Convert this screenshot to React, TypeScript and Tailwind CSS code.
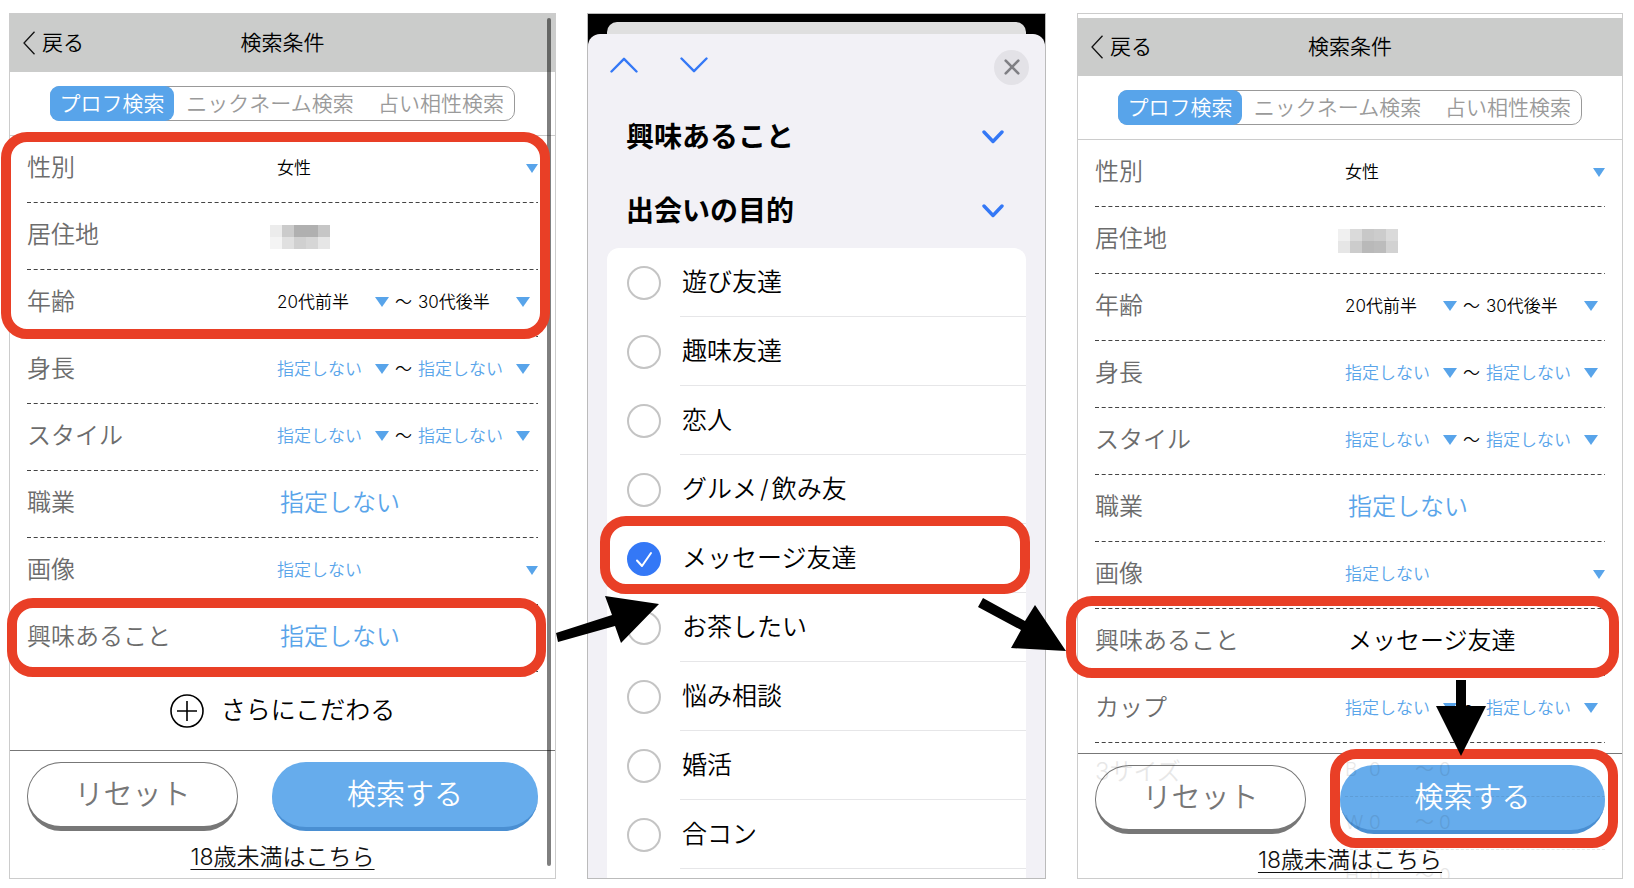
import { useState, type ReactNode } from "react";

type RowData =
  | { kind: "single"; label: string; value: string; dark?: boolean }
  | { kind: "range"; label: string; from: string; to: string; dark?: boolean }
  | { kind: "link"; label: string; value: string; dark?: boolean }
  | { kind: "masked"; label: string; shades: string[] };

const NONE = "指定しない";

const shadesA = [
  "bg-[#ececec]", "bg-[#cbcbcb]", "bg-[#b0b0b0]", "bg-[#b0b0b0]", "bg-[#c6c6c6]",
  "bg-[#f4f4f4]", "bg-[#e0e0e0]", "bg-[#d0d0d0]", "bg-[#d6d6d6]", "bg-[#e6e6e6]",
];
const shadesB = [
  "bg-[#f0f0f0]", "bg-[#dadada]", "bg-[#c8c8c8]", "bg-[#cccccc]", "bg-[#dadada]",
  "bg-[#e6e6e6]", "bg-[#cccccc]", "bg-[#b9b9b9]", "bg-[#bcbcbc]", "bg-[#d2d2d2]",
];

const detailRows: RowData[] = [
  { kind: "range", label: "身長", from: NONE, to: NONE },
  { kind: "range", label: "スタイル", from: NONE, to: NONE },
  { kind: "link", label: "職業", value: NONE },
  { kind: "single", label: "画像", value: NONE },
];

const basicRows = (shades: string[]): RowData[] => [
  { kind: "single", label: "性別", value: "女性", dark: true },
  { kind: "masked", label: "居住地", shades },
  { kind: "range", label: "年齢", from: "20代前半", to: "30代後半", dark: true },
];

function Highlight({ className, children }: { className: string; children?: ReactNode }) {
  return (
    <div className={`pointer-events-none absolute z-10 rounded-[26px] border-[10px] border-[#e93f26] ${className}`}>
      {children}
    </div>
  );
}

function Picker({ label, value, dark, className, small }: { label: string; value: string; dark?: boolean; className: string; small?: boolean }) {
  return (
    <span className={`relative flex items-center ${className}`}>
      <select
        aria-label={label}
        defaultValue={value}
        className={`w-full appearance-none bg-transparent text-[17px] leading-7 ${dark ? "text-black" : "text-[#5aa5ea]"}`}
      >
        <option>{value}</option>
      </select>
      <svg
        viewBox="0 0 14 10"
        preserveAspectRatio="none"
        className={`pointer-events-none absolute right-0 fill-[#58a4ea] ${small ? "h-[9px] w-3" : "h-[10px] w-[14px]"}`}
      >
        <path d="M0 0H14L7 10Z" />
      </svg>
    </span>
  );
}

function Row({ row, children }: { row: RowData; children?: ReactNode }) {
  return (
    <div className="relative flex h-[67px] items-center pb-[3px]">
      <span className="w-[250px] shrink-0 text-2xl text-[#6c6c6c]">{row.label}</span>
      {row.kind === "single" && (
        <Picker label={row.label} value={row.value} dark={row.dark} className="flex-1" small />
      )}
      {row.kind === "range" && (
        <div className="flex items-center gap-[6px]">
          <Picker label={`${row.label} 下限`} value={row.from} dark={row.dark} className="w-28" />
          <span className="text-[17px] leading-7 text-black">〜</span>
          <Picker label={`${row.label} 上限`} value={row.to} dark={row.dark} className="w-28" />
        </div>
      )}
      {row.kind === "link" && (
        <button type="button" className={`ml-[3px] text-2xl ${row.dark ? "text-black" : "text-[#5aa5ea]"}`}>
          {row.value}
        </button>
      )}
      {row.kind === "masked" && (
        <div className="-ml-[7px] mt-1 grid grid-cols-5">
          {row.shades.map((s, i) => (
            <span key={i} className={`size-3 ${s}`} />
          ))}
        </div>
      )}
      <svg className="absolute inset-x-0 bottom-0 h-px w-full" aria-hidden="true">
        <line x1="0" y1="0.5" x2="100%" y2="0.5" stroke="#444" strokeWidth="1" strokeDasharray="4 2.7" />
      </svg>
      {children}
    </div>
  );
}

function SearchHeader() {
  return (
    <>
      <header className="grid h-[58px] grid-cols-[1fr_auto_1fr] items-center bg-[#cbcccb] pl-[13px] text-[21px] text-black">
        <button type="button" className="flex items-center gap-[7px]">
          <svg viewBox="0 0 12 24" className="h-6 w-3 fill-none stroke-[#111]" strokeWidth="1.3">
            <path d="M11.5 0.7L1 12L11.5 23.3" />
          </svg>
          戻る
        </button>
        <h1 className="pr-[13px]">検索条件</h1>
      </header>
      <div className="border-b border-[#ccc] px-[40px] py-[14px]">
        <div className="flex h-[35px] items-stretch rounded-[10px] border border-[#999] text-[21px] leading-[31px] text-[#9a9a9a]">
          <button type="button" className="-my-px -ml-px w-[124px] rounded-[9px] bg-[#58a4ea] text-white">
            プロフ検索
          </button>
          <button type="button" className="flex-1 pr-1">ニックネーム検索</button>
          <button type="button" className="pr-[10px] pl-2">占い相性検索</button>
        </div>
      </div>
    </>
  );
}

function Footer({ highlighted }: { highlighted?: boolean }) {
  return (
    <footer className={`relative mt-auto border-t border-[#777] px-[17px] pt-[11px] ${highlighted ? "pb-px" : "pb-1"}`}>
      <div className="flex gap-[34px]">
        <button
          type="button"
          className="h-[69px] w-[211px] rounded-[34px] border border-b-[5px] border-[#777] bg-white text-[29px] leading-none text-[#777]"
        >
          リセット
        </button>
        <div className="relative flex-1">
          <button
            type="button"
            className="h-[69px] w-full rounded-[34px] border-b-4 border-[#4a8fd2] bg-[#66acec] text-[29px] leading-none text-white"
          >
            検索する
          </button>
          {highlighted && (
            <Highlight className="-top-[16px] -right-[13px] -bottom-[14px] -left-[10px]">
              <svg viewBox="0 0 50 76" className="absolute -top-[79px] left-[96px] h-[76px] w-[50px]">
                <path d="M20 0H30V26H50L25 76L0 26H20Z" />
              </svg>
            </Highlight>
          )}
        </div>
      </div>
      <div className="mt-[9px] flex h-[34px] items-center justify-center">
        <a href="#under18" className="text-[23px] leading-[34px] text-[#111] underline decoration-1 underline-offset-4">
          18歳未満はこちら
        </a>
      </div>
      {highlighted && (
        <div className="pointer-events-none absolute inset-0 overflow-hidden px-[17px] text-[#222] opacity-10" aria-hidden="true">
          <div className="flex">
            <span className="w-[250px] shrink-0 text-2xl leading-9">3サイズ</span>
            <div className="-mt-[10px] flex-1 text-[19px] leading-[52px]">
              {["B", "W", "H"].map((m) => (
                <div key={m} className="flex h-[53px] border-b border-dashed border-[#222] last:border-0">
                  <span className="w-6">{m}</span>
                  <span className="w-[46px]">0</span>
                  <span className="w-6">〜</span>
                  <span>0</span>
                </div>
              ))}
            </div>
          </div>
        </div>
      )}
    </footer>
  );
}

function InitialSearch() {
  return (
    <section className="relative flex flex-col border border-[#ccc] bg-white">
      <SearchHeader />
      <div className="px-[17px]">
        <div className="relative">
          {basicRows(shadesA).map((r) => (
            <Row key={r.label} row={r} />
          ))}
          <Highlight className="-top-1 -right-3 -bottom-[2px] -left-[26px]" />
        </div>
        {detailRows.map((r) => (
          <Row key={r.label} row={r} />
        ))}
        <Row row={{ kind: "link", label: "興味あること", value: NONE }}>
          <Highlight className="-top-[7px] -right-2 -bottom-[5px] -left-5" />
        </Row>
      </div>
      <button type="button" className="flex h-[77px] items-center justify-center gap-[17px] text-[25px] text-black">
        <svg viewBox="0 0 34 34" className="size-[34px] fill-none stroke-black" strokeWidth="1.6">
          <circle cx="17" cy="17" r="16" />
          <path d="M17 7V27M7 17H27" />
        </svg>
        さらにこだわる
      </button>
      <Footer />
      <div className="absolute top-[4px] right-[4px] bottom-[12px] w-[4px] rounded-full bg-black/50" />
    </section>
  );
}

function RefinedSearch() {
  return (
    <section className="relative flex flex-col border border-[#ccc] bg-white pt-1">
      <SearchHeader />
      <div className="px-[17px]">
        {[...basicRows(shadesB), ...detailRows].map((r) => (
          <Row key={r.label} row={r} />
        ))}
        <Row row={{ kind: "link", label: "興味あること", value: "メッセージ友達", dark: true }}>
          <Highlight className="-top-[13px] -right-[14px] -bottom-[2px] -left-[29px]" />
        </Row>
        <Row row={{ kind: "range", label: "カップ", from: NONE, to: NONE }} />
      </div>
      <Footer highlighted />
    </section>
  );
}

const purposes = [
  "遊び友達", "趣味友達", "恋人", "グルメ/飲み友", "メッセージ友達",
  "お茶したい", "悩み相談", "婚活", "合コン",
];

function PurposeName({ name }: { name: string }) {
  const [head, tail] = name.split("/");
  return (
    <span>
      {head}
      {tail && <span className="px-[3px]">/</span>}
      {tail}
    </span>
  );
}

function Chevron({ up, bold }: { up?: boolean; bold?: boolean }) {
  return bold ? (
    <svg viewBox="0 0 22 14" className="h-[14px] w-[22px] fill-none stroke-[#3478f6]" strokeWidth="3.4" strokeLinecap="round" strokeLinejoin="round">
      <path d="M2 2L11 11.5L20 2" />
    </svg>
  ) : (
    <svg viewBox="0 0 28 16" className="h-4 w-7 fill-none stroke-[#3478f6]" strokeWidth="2.4" strokeLinecap="round" strokeLinejoin="round">
      <path d={up ? "M1.5 14.5L14 1.8L26.5 14.5" : "M1.5 1.5L14 14.2L26.5 1.5"} />
    </svg>
  );
}

function PurposeSheet() {
  const [checked, setChecked] = useState<string>("メッセージ友達");
  return (
    <section className="flex flex-col border border-[#bbb] bg-black pt-2">
      <div className="mx-[19px] h-3 rounded-t-[10px] bg-[#dfdfdf]" />
      <div className="flex flex-1 flex-col rounded-t-[12px] bg-[#f2f1f6]">
        <div className="flex h-[66px] items-center pr-4 pl-[22px]">
          <div className="flex gap-[42px] pb-1">
            <button type="button" aria-label="前へ"><Chevron up /></button>
            <button type="button" aria-label="次へ"><Chevron /></button>
          </div>
          <button type="button" aria-label="閉じる" className="ml-auto flex size-[35px] items-center justify-center rounded-full bg-[#e3e2e7]">
            <svg viewBox="0 0 16 16" className="size-4 fill-none stroke-[#7f7f84]" strokeWidth="2.6" strokeLinecap="round">
              <path d="M1.7 1.7L14.3 14.3M14.3 1.7L1.7 14.3" />
            </svg>
          </button>
        </div>
        {["興味あること", "出会いの目的"].map((t) => (
          <button key={t} type="button" className="flex h-[74px] items-center justify-between pr-[41px] pl-[38px] text-[28px] font-bold text-black">
            {t}
            <Chevron bold />
          </button>
        ))}
        <ul className="mx-[19px] flex flex-1 flex-col rounded-t-[12px] bg-white pb-[9px]">
          {purposes.map((p) => (
            <li key={p} className="relative flex min-h-[68px] flex-1">
              <label className="flex flex-1 items-stretch pl-5">
                <span className="relative mr-[19px] flex items-center">
                  <input
                    type="checkbox"
                    checked={checked === p}
                    onChange={() => setChecked(p)}
                    className="size-[34px] appearance-none rounded-full border-2 border-[#c4c4c4] checked:border-[#3478f6] checked:bg-[#3478f6]"
                  />
                  {checked === p && (
                    <svg viewBox="0 0 34 34" className="pointer-events-none absolute size-[34px] fill-none stroke-white" strokeWidth="2" strokeLinecap="round" strokeLinejoin="round">
                      <path d="M10 18.5L15 24L24 11" />
                    </svg>
                  )}
                </span>
                <span className="flex flex-1 items-center border-b border-[#e6e6e8] pt-[2px] pl-[2px] text-[25px] text-black">
                  <PurposeName name={p} />
                </span>
              </label>
              {p === "メッセージ友達" && (
                <Highlight className="-top-2 -right-1 -bottom-px -left-[7px]">
                  <svg viewBox="0 0 104 50" className="absolute top-[69px] -left-[54px] h-[50px] w-[104px]">
                    <path d="M0 38L56 20L49 1L103 9L65 48L59 31L2 47Z" />
                  </svg>
                  <svg viewBox="0 0 92 56" className="absolute top-[71px] -right-[48px] h-14 w-[92px]">
                    <path d="M7 1L49 24L59 8L90 54L35 51L45 33L2 10Z" />
                  </svg>
                </Highlight>
              )}
            </li>
          ))}
        </ul>
      </div>
    </section>
  );
}

export default function App() {
  return (
    <main
      lang="ja"
      className="grid min-h-screen grid-cols-[547fr_459fr_546fr] gap-[31px] overflow-hidden bg-white pt-[13px] pr-[11px] pb-[9px] pl-[9px] font-['Inter','Noto_Sans_CJK_JP',sans-serif] font-[350]"
    >
      <InitialSearch />
      <PurposeSheet />
      <RefinedSearch />
    </main>
  );
}
